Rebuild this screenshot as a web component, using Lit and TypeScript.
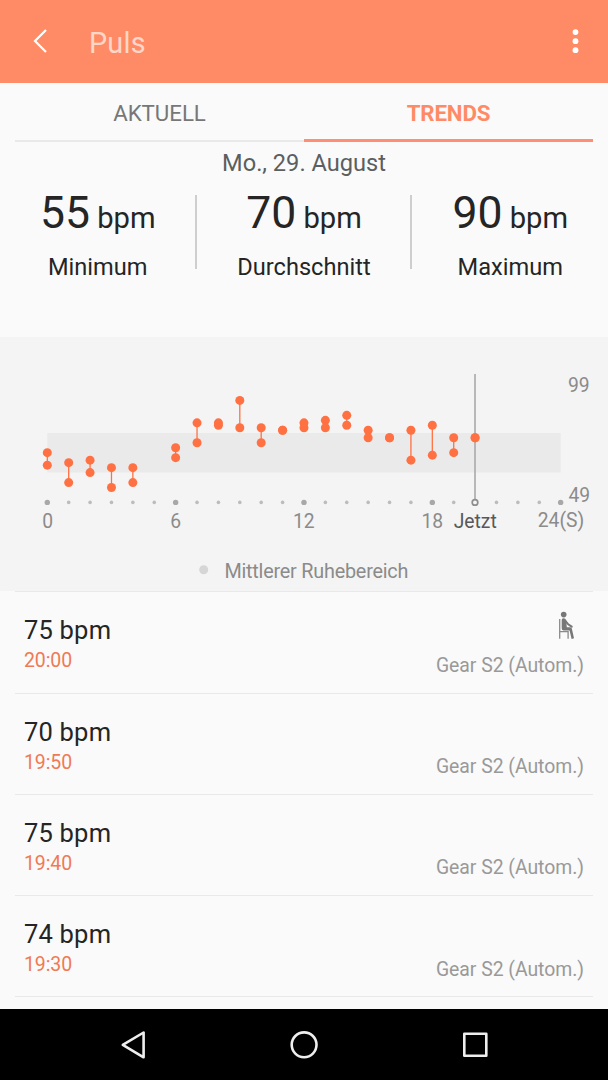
import { LitElement, html, svg, css, nothing } from "lit";
import { customElement, property } from "lit/decorators.js";

type Sample = { hour: number; max: number; min: number };

const SAMPLES: Sample[] = (
  [
    [0, 69, 64], [1, 65, 57], [2, 66, 61], [3, 63, 55], [4, 63, 57],
    [6, 71, 67], [7, 81, 73], [8, 81, 80], [9, 90, 79], [10, 79, 73],
    [11, 78, 78], [12, 81, 79], [13, 82, 79], [14, 84, 80], [15, 78, 75],
    [16, 75, 75], [17, 78, 66], [18, 80, 68], [19, 75, 69], [20, 75, 75],
  ] as [number, number, number][]
).map(([hour, max, min]) => ({ hour, max, min }));

const NOW = 20;
const AXIS_Y = 165.4;
const hourX = (h: number) => 47.3 + h * 21.39;
const bpmY = (v: number) => 63.4 + (90 - v) * 2.49;

@customElement("pulse-chart")
export class PulseChart extends LitElement {
  static styles = css`
    :host { display: block; flex: none; height: 254px; background: #f4f4f4; }
    svg { display: block; }
    text { font-family: Roboto, sans-serif; font-size: 19.3px; fill: #8b8b8b; }
    .now { fill: #55595a; }
    .legend { fill: #8b8b8b; font-size: 19.8px; }
  `;

  render() {
    const hours = Array.from({ length: 25 }, (_, i) => i);
    return html`
      <svg width="608" height="254" viewBox="0 0 608 254">
        <rect x="47.3" y="96" width="513.4" height="39.5" fill="#eaeaea" />
        ${hours.map((h) =>
          h === NOW
            ? nothing
            : svg`<circle cx=${hourX(h)} cy=${AXIS_Y} r=${h % 6 ? 1.8 : 2.7} fill=${h % 6 ? "#bcbcbc" : "#a8a8a8"} />`
        )}
        <line x1=${hourX(NOW) - 0.1} x2=${hourX(NOW) - 0.1} y1="37" y2="163" stroke="#adadad" stroke-width="1.7" />
        <circle cx=${hourX(NOW) - 0.1} cy=${AXIS_Y} r="2.8" fill="#f4f4f4" stroke="#8e8e8e" stroke-width="1.7" />
        ${SAMPLES.map((s) => {
          const x = hourX(s.hour);
          return svg`
            <line x1=${x} x2=${x} y1=${bpmY(s.max)} y2=${bpmY(s.min)} stroke="#ff7143" stroke-width="1.3" />
            <circle cx=${x} cy=${bpmY(s.max)} r="4.5" fill="#ff7143" />
            <circle cx=${x} cy=${bpmY(s.min)} r="4.5" fill="#ff7143" />`;
        })}
        <text x="568" y="55.4" textLength="21.5">99</text>
        <text x="568.5" y="164.6" textLength="21.5">49</text>
        <text x="47.6" y="191.4" text-anchor="middle">0</text>
        <text x="175.7" y="191.4" text-anchor="middle">6</text>
        <text x="303.8" y="191.4" text-anchor="middle">12</text>
        <text x="432.3" y="191.4" text-anchor="middle">18</text>
        <text class="now" x="475.2" y="191.4" text-anchor="middle">Jetzt</text>
        <text x="561" y="190.4" text-anchor="middle">24(S)</text>
        <circle cx="203.7" cy="232.7" r="4.5" fill="#d6d6d6" />
        <text class="legend" x="224.4" y="240.6" textLength="184">Mittlerer Ruhebereich</text>
      </svg>
    `;
  }
}

@customElement("pulse-entry")
export class PulseEntry extends LitElement {
  @property({ type: Number }) bpm = 0;
  @property() time = "";
  @property({ type: Boolean }) seated = false;

  static styles = css`
    :host {
      display: flex; justify-content: space-between; box-sizing: border-box;
      height: 101.2px; margin: 0 15px; padding: 0 9px;
      border-bottom: 1.4px solid #e9e9e9;
    }
    .left { padding-top: 22.1px; }
    .bpm { font-size: 25.5px; line-height: 32px; color: #252525; letter-spacing: 0.2px; }
    .time { font-size: 19.5px; line-height: 29px; color: #ef7a55; letter-spacing: -0.1px; }
    .right { display: flex; flex-direction: column; align-items: flex-end; }
    .icon { height: 60.6px; width: 28px; }
    .icon svg { display: block; }
    .source { font-size: 19.4px; line-height: 26px; color: #999; letter-spacing: -0.03px; }
  `;

  render() {
    return html`
      <div class="left">
        <div class="bpm">${this.bpm} bpm</div>
        <div class="time">${this.time}</div>
      </div>
      <div class="right">
        <div class="icon">
          ${this.seated
            ? html`<svg width="28" height="60" viewBox="556 592 28 60">
                <circle cx="563.7" cy="614.6" r="2.8" fill="#777" />
                <path d="M559.7 619v19.7M560 631.6h8.1v7.1" fill="none" stroke="#8a8a8a" stroke-width="1.3" />
                <path d="M561.7 620Q561.7 618.2 563.4 618.2Q565.8 618.2 566.2 620.4L566.8 627.2H570.2Q571.4 627.3 571.8 628.6L574 638.2L571.6 638.9L569.6 630.4H563.4Q561.7 630.2 561.7 628.6Z" fill="#777" />
                <path d="M565.4 620.8L568.2 624.3L571.7 626.6" fill="none" stroke="#777" stroke-width="2" stroke-linecap="round" />
              </svg>`
            : nothing}
        </div>
        <div class="source">Gear S2 (Autom.)</div>
      </div>
    `;
  }
}

@customElement("app-root")
export class AppRoot extends LitElement {
  static styles = css`
    :host {
      display: flex; flex-direction: column; width: 608px; height: 1080px;
      overflow: hidden; background: #fafafa; font-family: Roboto, sans-serif; color: #252525;
    }
    header {
      display: flex; align-items: center; flex: none; height: 82.5px;
      box-sizing: border-box; background: #ff8b66; padding: 0 28px 0 32px;
    }
    header svg { display: block; }
    h1 {
      margin: 3px 0 0 41px; flex: 1; font-size: 28.8px; line-height: 34px; font-weight: 400;
      color: #ffd6c8; letter-spacing: 0.2px;
    }
    .tabs {
      display: grid; grid-template-columns: 1fr 1fr; grid-template-rows: 59.5px;
      flex: none; height: 59.5px; margin: 0 15px;
    }
    .tab {
      box-sizing: border-box; height: 59.5px; text-align: center; font-size: 22.3px; line-height: 61.5px;
      color: #777; border-bottom: 2px solid #e9e9e9; letter-spacing: -0.05px;
    }
    .tab.active { color: #ff8b66; font-weight: 700; border-bottom: 3px solid #ff8f74; letter-spacing: -0.15px; }
    .date { flex: none; height: 41px; line-height: 42px; text-align: center; font-size: 23.6px; color: #5b5f5f; }
    .stats { display: flex; flex: none; height: 154px; padding-top: 12px; box-sizing: border-box; }
    .stat { flex: 1; text-align: center; }
    .stat.mid { flex: none; width: 213px; }
    .value { font-size: 44.5px; line-height: 36px; white-space: nowrap; }
    .unit { font-size: 29.2px; }
    .label { font-size: 23.6px; line-height: 30px; margin-top: 16px; }
    .rule { flex: none; width: 2px; height: 74px; margin: 0 0.5px 0 -0.5px; background: #cecece; }
    .list { flex: 1; overflow: hidden; }
    .top { height: 1.4px; margin: 0 15px; background: #e9e9e9; }
    nav { display: flex; flex: none; height: 71px; background: #000; }
  `;

  render() {
    const stats = [
      ["55", "Minimum"],
      ["70", "Durchschnitt"],
      ["90", "Maximum"],
    ];
    const entries: [number, string][] = [
      [75, "20:00"], [70, "19:50"], [75, "19:40"], [74, "19:30"],
    ];
    return html`
      <header>
        <svg width="16" height="26" viewBox="0 0 16 26">
          <path d="M14 2L3 13L14 24" fill="none" stroke="#fff" stroke-width="2.2" />
        </svg>
        <h1>Puls</h1>
        <svg width="9" height="28" viewBox="0 0 9 28">
          <g fill="#fff"><circle cx="4.5" cy="5.1" r="2.9" /><circle cx="4.5" cy="14.2" r="2.9" /><circle cx="4.5" cy="23.2" r="2.9" /></g>
        </svg>
      </header>
      <div class="tabs">
        <div class="tab">AKTUELL</div>
        <div class="tab active">TRENDS</div>
      </div>
      <div class="date">Mo., 29. August</div>
      <div class="stats">
        ${stats.map(
          ([value, label], i) => html`
            ${i ? html`<div class="rule"></div>` : nothing}
            <div class="stat ${i === 1 ? "mid" : ""}">
              <div class="value">${value}<span class="unit"> bpm</span></div>
              <div class="label">${label}</div>
            </div>`
        )}
      </div>
      <pulse-chart></pulse-chart>
      <div class="list">
        <div class="top"></div>
        ${entries.map(
          ([bpm, time], i) => html`<pulse-entry .bpm=${bpm} .time=${time} .seated=${i === 0}></pulse-entry>`
        )}
      </div>
      <nav>
        <svg width="608" height="71" viewBox="0 0 608 71" fill="none" stroke="#eee" stroke-width="2.6" stroke-linejoin="round">
          <path d="M122.8 35.8L143.6 23.5V48.3Z" />
          <circle cx="304.1" cy="35.8" r="12.4" />
          <rect x="464.3" y="24.8" width="22" height="22" />
        </svg>
      </nav>
    `;
  }
}
